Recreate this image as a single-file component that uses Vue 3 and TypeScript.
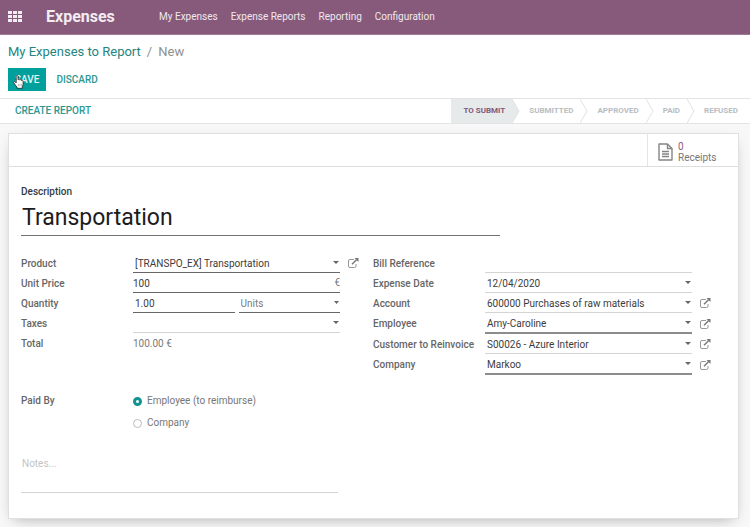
<script setup lang="ts">
import { ref } from 'vue'

interface Field {
  id: string
  label: string
  value: string
  kind: 'text' | 'select' | 'date' | 'money' | 'quantity' | 'static'
  line?: 'firm' | 'strong'
  external?: boolean
}

const menu: string[] = ['My Expenses', 'Expense Reports', 'Reporting', 'Configuration']
const steps: string[] = ['To Submit', 'Submitted', 'Approved', 'Paid', 'Refused']

const title = ref('Transportation')
const notes = ref('')
const paidBy = ref('employee')
const unit = ref('Units')

const columns = ref<Field[][]>([
  [
    { id: 'product', label: 'Product', value: '[TRANSPO_EX] Transportation', kind: 'select', line: 'firm', external: true },
    { id: 'price', label: 'Unit Price', value: '100', kind: 'money', line: 'firm' },
    { id: 'quantity', label: 'Quantity', value: '1.00', kind: 'quantity', line: 'firm' },
    { id: 'taxes', label: 'Taxes', value: '', kind: 'select' },
    { id: 'total', label: 'Total', value: '100.00 €', kind: 'static' },
  ],
  [
    { id: 'bill', label: 'Bill Reference', value: '', kind: 'text' },
    { id: 'date', label: 'Expense Date', value: '12/04/2020', kind: 'date' },
    { id: 'account', label: 'Account', value: '600000 Purchases of raw materials', kind: 'select', external: true },
    { id: 'employee', label: 'Employee', value: 'Amy-Caroline', kind: 'select', line: 'strong', external: true },
    { id: 'customer', label: 'Customer to Reinvoice', value: 'S00026 - Azure Interior', kind: 'select', external: true },
    { id: 'company', label: 'Company', value: 'Markoo', kind: 'select', line: 'strong', external: true },
  ],
])
</script>

<template>
  <div class="page">
    <header class="navbar">
      <button class="apps" type="button" aria-label="Apps">
        <svg width="14" height="12" viewBox="0 0 14 12" fill="currentColor">
          <template v-for="r in 3" :key="r">
            <rect v-for="c in 3" :key="c" :x="(c - 1) * 5" :y="(r - 1) * 4" width="4" height="3" />
          </template>
        </svg>
      </button>
      <a class="brand" href="#">Expenses</a>
      <nav class="menu">
        <a v-for="item in menu" :key="item" href="#">{{ item }}</a>
      </nav>
    </header>

    <section class="control">
      <div class="crumbs">
        <a href="#">My Expenses to Report</a><span class="slash">/</span><span class="current">New</span>
      </div>
      <div class="actions">
        <button class="save" type="button">
          Save
          <svg class="pointer" width="11" height="14" viewBox="0 0 11 14">
            <path
              d="M3.2 1.4c0-1.2 1.8-1.2 1.8 0v3.4c.3-.6 1.5-.6 1.7.2.4-.5 1.5-.4 1.7.4.6-.4 1.7-.1 1.7.9v3c0 1-.6 1.6-.8 2.6v1.4H4v-1.2C3.2 11 1.5 9.2.7 7.8c-.5-1 .7-1.7 1.5-.9l1 1z"
              fill="#fff" stroke="#222" stroke-width=".8" stroke-linejoin="round"
            />
            <path d="M5.4 9v2.2M7 9v2.2M8.5 9v2.2" stroke="#777" stroke-width=".5" />
          </svg>
        </button>
        <button class="discard" type="button">Discard</button>
      </div>
    </section>

    <section class="statusbar">
      <button class="report" type="button">Create Report</button>
      <ol class="steps">
        <li v-for="(step, i) in steps" :key="step" :class="{ active: i === 0 }">
          <span class="step">{{ step }}</span>
          <svg v-if="i < steps.length - 1" class="arrow" width="9" height="24" viewBox="0 0 9 24">
            <path class="fill" d="M0 0L7 12L0 24Z" />
            <path class="edge" d="M0 0L7 12L0 24" />
          </svg>
        </li>
      </ol>
    </section>

    <main class="sheet">
      <div class="buttonbox">
        <button class="stat" type="button">
          <svg width="15" height="18" viewBox="0 0 15 18" fill="none" stroke="#858585" stroke-width="1.4">
            <path d="M1 1h8.5L14 5.5V17H1z" stroke-linejoin="round" />
            <path d="M9.5 1v4.5H14M4 8.5h7M4 11h7M4 13.5h7" />
          </svg>
          <span class="stattext"><span class="count">0</span><span>Receipts</span></span>
        </button>
      </div>

      <form class="body" @submit.prevent>
        <label class="caption" for="title">Description</label>
        <input id="title" v-model="title" class="title" type="text" />

        <div class="groups">
          <div v-for="(fields, g) in columns" :key="g" class="group">
            <div v-for="f in fields" :key="f.id" class="row">
              <label class="label" :for="f.id">{{ f.label }}</label>

              <output v-if="f.kind === 'static'" :id="f.id" class="static">{{ f.value }}</output>

              <div v-else-if="f.kind === 'quantity'" class="pair">
                <div class="field firm">
                  <input :id="f.id" v-model="f.value" class="control-input" type="text" />
                </div>
                <div class="field firm muted">
                  <select v-model="unit" class="control-input" aria-label="Unit of measure">
                    <option>Units</option>
                  </select>
                  <svg class="caret" width="5" height="3" viewBox="0 0 5 3"><path d="M0 0h5L2.5 3z" /></svg>
                </div>
              </div>

              <div v-else class="field" :class="[f.line, { money: f.kind === 'money' }]">
                <select v-if="f.kind === 'select'" :id="f.id" v-model="f.value" class="control-input">
                  <option :value="f.value">{{ f.value }}</option>
                </select>
                <input v-else :id="f.id" v-model="f.value" class="control-input" type="text" />
                <svg v-if="f.kind === 'select' || f.kind === 'date'" class="caret" width="6" height="3" viewBox="0 0 6 3">
                  <path d="M0 0h6L3 3z" />
                </svg>
                <span v-if="f.kind === 'money'" class="currency">€</span>
              </div>

              <button v-if="f.external" class="external" type="button" :aria-label="'Open ' + f.label">
                <svg width="11" height="10" viewBox="0 0 11 10" fill="none" stroke="currentColor">
                  <path d="M6 1.5H2Q.5 1.5.5 3V8Q.5 9.5 2 9.5H6.5Q8 9.5 8 8V6" opacity=".75" />
                  <path d="M4 6.2L8.5 1.7" stroke-width="1.5" />
                  <path d="M6.5 0H10.5V4Z" fill="currentColor" stroke="none" />
                </svg>
              </button>
            </div>
          </div>
        </div>

        <fieldset class="paid">
          <legend class="label">Paid By</legend>
          <div class="options">
            <label><input v-model="paidBy" type="radio" name="paid" value="employee" />Employee (to reimburse)</label>
            <label><input v-model="paidBy" type="radio" name="paid" value="company" />Company</label>
          </div>
        </fieldset>

        <textarea v-model="notes" class="notes" placeholder="Notes..." aria-label="Notes"></textarea>
      </form>
    </main>
  </div>
</template>

<style>
body {
  margin: 0;
  background: #f8f8f8;
}
</style>

<style scoped>
.page {
  font-family: Roboto, "Liberation Sans", sans-serif;
  font-size: 10px;
  line-height: 12px;
  color: #4c4c4c;
}
.page * {
  box-sizing: border-box;
}
button,
input,
select,
textarea {
  margin: 0;
  padding: 0;
  border: 0;
  border-radius: 0;
  background: none;
  font: inherit;
  color: inherit;
  outline: none;
}
button {
  cursor: pointer;
}
a {
  color: inherit;
  text-decoration: none;
}

.navbar {
  display: flex;
  align-items: center;
  height: 35px;
  padding: 0 8px;
  background: #875a7b;
  border-bottom: 1px solid #a17a97;
  color: #fff;
}
.apps {
  display: flex;
  width: 38px;
  color: #f3edf1;
}
.brand {
  width: 113px;
  font-size: 16px;
  font-weight: 700;
  line-height: 20px;
  color: #f3ecf1;
}
.menu {
  display: flex;
  gap: 13px;
  color: #f0e8ee;
}

.control {
  display: flex;
  flex-direction: column;
  gap: 7px;
  padding: 8px 8px 7px;
  background: #fff;
  border-bottom: 1px solid #e3e3e3;
}
.crumbs {
  font-size: 13px;
  line-height: 18px;
  color: #8f8f8f;
}
.crumbs a {
  color: #25857f;
}
.slash {
  padding: 0 6px;
}
.actions {
  display: flex;
  gap: 10px;
}
.save,
.discard,
.report {
  font-weight: 500;
  text-transform: uppercase;
  color: #2b9892;
}
.save {
  position: relative;
  height: 23px;
  padding: 0 7px;
  background: #00a09d;
  color: #e4f5f4;
}
.pointer {
  position: absolute;
  left: 5px;
  top: 7px;
}

.statusbar {
  display: flex;
  justify-content: space-between;
  height: 25px;
  padding: 0 12px 0 15px;
  background: #fff;
  border-bottom: 1px solid #e3e3e3;
}
.steps {
  display: flex;
  margin: 0;
  padding: 0;
  list-style: none;
  font-size: 8px;
  font-weight: 700;
  text-transform: uppercase;
  color: #b8bdc3;
}
.steps li {
  display: flex;
  align-items: center;
}
.step {
  padding: 0 7px 0 8px;
}
.steps li:last-child .step {
  padding-right: 0;
}
.active .step {
  align-self: stretch;
  padding-left: 12px;
  line-height: 24px;
  background: #e7eaeb;
  color: #84597a;
}
.arrow .fill {
  fill: #fff;
}
.active .arrow .fill {
  fill: #e7eaeb;
}
.arrow .edge {
  fill: none;
  stroke: #dfe2e4;
}

.sheet {
  margin: 9px 11px 8px 8px;
  background: #fff;
  border: 1px solid #e0e0e0;
  box-shadow: 0 5px 14px -6px rgba(0, 0, 0, 0.35);
}
.buttonbox {
  display: flex;
  justify-content: flex-end;
  height: 33px;
  border-bottom: 1px solid #dedede;
}
.stat {
  display: flex;
  align-items: center;
  gap: 5px;
  width: 91px;
  padding: 3px 0 0 10px;
  border-left: 1px solid #e4e4e4;
  text-align: left;
  line-height: 11px;
  color: #777;
}
.stattext {
  display: flex;
  flex-direction: column;
}
.count {
  color: #875a7b;
}

.body {
  padding: 19px 13px 25px 12px;
}
.caption {
  display: block;
  font-weight: 500;
  color: #333b42;
}
.title {
  display: block;
  width: 68%;
  height: 38px;
  padding: 3px 1px 1px;
  border-bottom: 1px solid #707070;
  font-size: 23px;
  color: #1c1c1c;
}
.groups {
  display: grid;
  grid-template-columns: 1fr 1fr;
  padding-top: 17px;
}
.row {
  display: grid;
  grid-template-columns: 112px 1fr 33px;
}
.label,
.static {
  padding-top: 1px;
  line-height: 19px;
}
.label {
  font-weight: 500;
  color: #666;
}
.field {
  display: flex;
  align-items: center;
  min-width: 0;
  padding-left: 2px;
  padding-right: 1px;
  border-bottom: 1px solid #d4d4d4;
  color: #3c3c3c;
}
.field.firm {
  border-bottom-color: #666;
}
.field.strong {
  border-bottom: 2px solid #8c8c8c;
}
.field.money {
  padding-left: 0;
  padding-right: 0;
}
.field.muted {
  color: #7a7a7a;
}
.control-input {
  flex: 1;
  min-width: 0;
  height: 19px;
  padding-top: 1px;
  appearance: none;
}
select.control-input {
  padding-top: 2px;
}
.caret {
  fill: #666;
}
.currency,
.static {
  color: #7a7a7a;
}
.currency {
  padding-top: 1px;
}
.pair {
  display: grid;
  grid-template-columns: 1fr 1fr;
  gap: 4px;
}
.external {
  display: flex;
  align-items: center;
  padding-left: 8px;
  color: #777;
}

.paid {
  display: flex;
  margin: 0;
  padding: 16px 0 0;
  border: 0;
}
.paid legend {
  float: left;
  width: 112px;
  padding: 0;
  line-height: 20px;
}
.options {
  display: flex;
  flex-direction: column;
  gap: 2px;
  line-height: 20px;
  color: #777;
}
.options label {
  display: flex;
  align-items: center;
  gap: 5px;
}
.options input {
  width: 9px;
  height: 9px;
  border: 1px solid #bbb;
  border-radius: 50%;
  appearance: none;
}
.options input:checked {
  border: 3px solid #109490;
}
.notes {
  display: block;
  width: 45%;
  height: 36px;
  margin-top: 24px;
  padding: 1px;
  border-bottom: 1px solid #d4d4d4;
  resize: none;
}
.notes::placeholder {
  color: #c4c4c4;
}
</style>
